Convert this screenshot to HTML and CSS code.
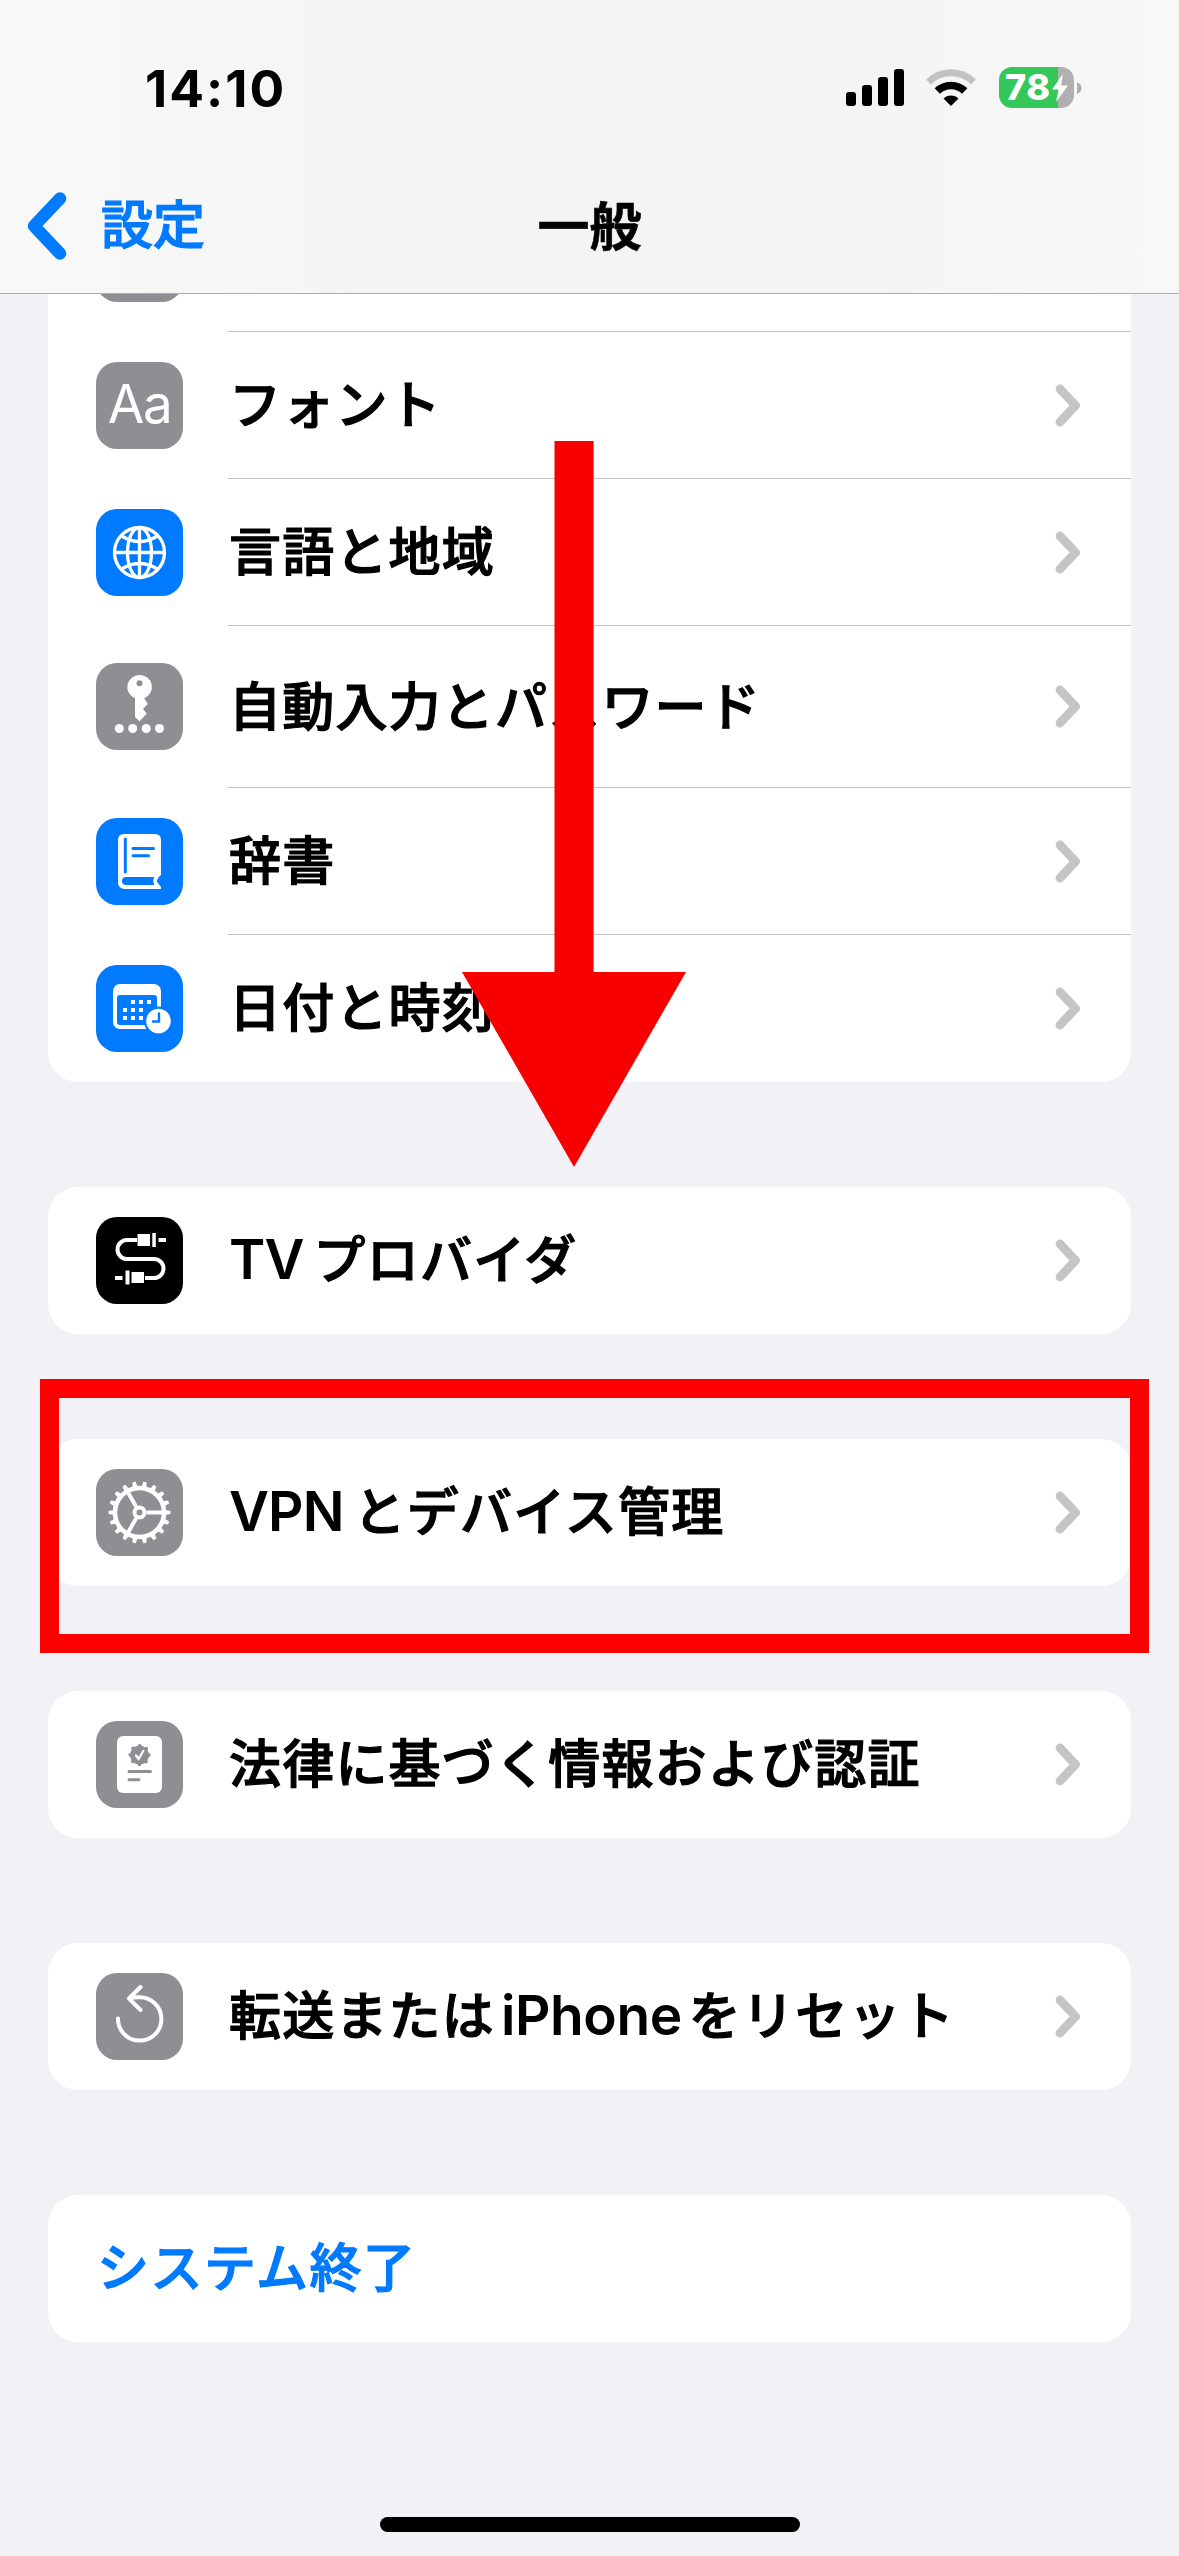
FILE: index.html
```html
<!DOCTYPE html>
<html lang="ja">
<head>
<meta charset="utf-8">
<title>一般</title>
<link rel="stylesheet" href="styles.css">
</head>
<body>
<svg class="defs" width="0" height="0">
  <defs>
    <symbol id="chev" viewBox="0 0 26 44"><path d="M5 5 L20.500 21.500 L5 38" fill="none" stroke="#c5c5c7" stroke-width="8.800" stroke-linecap="round" stroke-linejoin="round"/></symbol>
    <path id="tooth" d="M-2.600 -25.500 L-1.600 -31 H1.600 L2.600 -25.500 Z"/>
  </defs>
</svg>
<div class="screen">
  <header class="header">
    <div class="status">
      <span class="time">14:10</span>
      <div class="indicators">
        <svg width="58" height="38" viewBox="0 0 58 38"><rect x="0" y="23" width="10" height="14" rx="3"/><rect x="16" y="16" width="10" height="21" rx="3"/><rect x="32" y="8" width="10" height="29" rx="3"/><rect x="48" y="0" width="10" height="37" rx="3"/></svg>
        <svg class="wifi" width="50" height="38" viewBox="0 0 50 38"><path d="M2.500 13 A32 32 0 0 1 47.500 13" fill="none" stroke="#c2c2c2" stroke-width="7"/><path d="M11.300 22 A19.500 19.500 0 0 1 38.700 22" fill="none" stroke="#000" stroke-width="7.500"/><path d="M25 37 L17.500 29.500 A10.600 10.600 0 0 1 32.500 29.500 Z"/></svg>
        <div class="battery"><span>78</span><svg class="bolt" width="18" height="28" viewBox="0 0 18 28"><path d="M12 0 L1 15.500 H7.500 L5 28 L17 11.500 H10 Z" fill="#fff"/></svg></div>
        <svg width="5" height="12" viewBox="0 0 5 12"><path d="M0 0 Q4.500 2 4.500 6 T0 12 Z" fill="#b0b0b0"/></svg>
      </div>
    </div>
    <nav class="nav">
      <a class="back"><svg width="42" height="68" viewBox="0 0 42 68"><path d="M34 6.500 L8 34 L34 61.500" fill="none" stroke="#007aff" stroke-width="12.500" stroke-linecap="round" stroke-linejoin="round"/></svg><span>設定</span></a>
      <h1 class="title">一般</h1>
    </nav>
  </header>
  <main class="list">
    <section class="card first">
      <div class="row partial"><span class="icon gray cut"></span></div>
      <div class="row"><span class="icon gray aa">Aa</span><span class="label">フォント</span><svg class="chev"><use href="#chev"/></svg></div>
      <div class="row"><span class="icon blue"><svg viewBox="0 0 87 87" fill="none" stroke="#fff" stroke-width="3.300"><circle cx="43.500" cy="43.500" r="25"/><ellipse cx="43.500" cy="43.500" rx="12" ry="25"/><path d="M43.500 18.500 V68.500 M18.500 43.500 H68.500 M25.500 27 Q43.500 38 61.500 27 M25.500 60 Q43.500 49 61.500 60"/></svg></span><span class="label">言語と地域</span><svg class="chev"><use href="#chev"/></svg></div>
      <div class="row tall"><span class="icon gray"><svg viewBox="0 0 87 87" fill="#fff"><path fill-rule="evenodd" d="M43.500 12 A12 12 0 0 1 48.200 35.200 L51.800 41 L47 46 L50.800 50.500 L43.500 58.200 L39 54 V35.200 A12 12 0 0 1 43.500 12 Z M43.500 17.300 A3 3 0 1 0 43.500 23.300 A3 3 0 1 0 43.500 17.300 Z"/><circle cx="23.300" cy="65.500" r="4.500"/><circle cx="36.700" cy="65.500" r="4.500"/><circle cx="50.200" cy="65.500" r="4.500"/><circle cx="63.500" cy="65.500" r="4.500"/></svg></span><span class="label">自動入力とパスワード</span><svg class="chev"><use href="#chev"/></svg></div>
      <div class="row"><span class="icon blue"><svg viewBox="0 0 87 87"><path d="M28 16 H59 Q65 16 65 22 V57 Q61 60 61 64 L65 69 V71 H29 Q22 71 22 64 V22 Q22 16 28 16 Z" fill="#fff"/><path d="M29.300 21 V54 M37 30.500 H57.500 M37 37.700 H52.500" stroke="#007aff" stroke-width="3" stroke-linecap="round" fill="none"/><path d="M30 59 H58.500 Q56 63 58.500 67 H30 Q26 67 26 63 Q26 59 30 59 Z" fill="#007aff"/></svg></span><span class="label">辞書</span><svg class="chev"><use href="#chev"/></svg></div>
      <div class="row"><span class="icon blue"><svg viewBox="0 0 87 87"><rect x="17" y="19" width="48" height="45" rx="7" fill="#fff"/><path d="M21 33 Q21 30 24 30 H58 Q61 30 61 33 V60 H24 Q21 60 21 57 Z" fill="#007aff"/><path d="M35 35h4v4h-4zM43 35h4v4h-4zM51 35h4v4h-4zM27 43h4v4h-4zM35 43h4v4h-4zM43 43h4v4h-4zM27 51h4v4h-4zM35 51h4v4h-4zM43 51h4v4h-4z" fill="#fff"/><circle cx="62.500" cy="56" r="14.500" fill="#007aff"/><circle cx="62.500" cy="56" r="12.300" fill="#fff"/><path d="M63 48.500 V56.500 H57" stroke="#007aff" stroke-width="2.400" stroke-linecap="round" fill="none"/></svg></span><span class="label">日付と時刻</span><svg class="chev"><use href="#chev"/></svg></div>
    </section>
    <section class="card"><div class="row"><span class="icon black"><svg viewBox="0 0 87 87"><path d="M41 23 H31 A9.500 9.500 0 0 0 31 42 H58 A9.500 9.500 0 0 1 58 61 H49" fill="none" stroke="#fff" stroke-width="4"/><path d="M41.500 17h12.500v12H41.500zM56.300 16h3.500v14h-3.500zM62.500 21H70v4H62.500zM35.500 55h12.500v11H35.500zM29.500 53.500h4v14h-4zM19 59h7.500v4H19z" fill="#fff"/></svg></span><span class="label"><span class="latin first-word">TV</span>プロバイダ</span><svg class="chev"><use href="#chev"/></svg></div></section>
    <section class="card"><div class="row"><span class="icon gray"><svg viewBox="0 0 87 87"><g transform="translate(43.500 43.500)"><circle r="24.500" fill="none" stroke="#fff" stroke-width="4.500"/><circle r="5" fill="none" stroke="#fff" stroke-width="4"/><path d="M7 0 H23 M-3.500 -6 L-12 -21 M-3.500 6 L-12 21" stroke="#fff" stroke-width="4"/><g fill="#fff"><use href="#tooth" transform="rotate(10)"/><use href="#tooth" transform="rotate(30)"/><use href="#tooth" transform="rotate(50)"/><use href="#tooth" transform="rotate(70)"/><use href="#tooth" transform="rotate(90)"/><use href="#tooth" transform="rotate(110)"/><use href="#tooth" transform="rotate(130)"/><use href="#tooth" transform="rotate(150)"/><use href="#tooth" transform="rotate(170)"/><use href="#tooth" transform="rotate(190)"/><use href="#tooth" transform="rotate(210)"/><use href="#tooth" transform="rotate(230)"/><use href="#tooth" transform="rotate(250)"/><use href="#tooth" transform="rotate(270)"/><use href="#tooth" transform="rotate(290)"/><use href="#tooth" transform="rotate(310)"/><use href="#tooth" transform="rotate(330)"/><use href="#tooth" transform="rotate(350)"/></g></g></svg></span><span class="label"><span class="latin first-word">VPN</span>とデバイス管理</span><svg class="chev"><use href="#chev"/></svg></div></section>
    <section class="card"><div class="row"><span class="icon gray"><svg viewBox="0 0 87 87"><rect x="21" y="15" width="45" height="57" rx="6" fill="#fff"/><circle cx="43.500" cy="34" r="9.500" fill="#8e8e93"/><circle cx="43.500" cy="34" r="9.200" fill="none" stroke="#8e8e93" stroke-width="3.800" stroke-dasharray="0 7.226" stroke-linecap="round"/><path d="M40 34.500 L42.500 38 L47.300 30" fill="none" stroke="#fff" stroke-width="2.200" stroke-linecap="round"/><path d="M33 50.500 H54.500 M33 58.700 H43" stroke="#8e8e93" stroke-width="3" stroke-linecap="round"/></svg></span><span class="label">法律に基づく情報および認証</span><svg class="chev"><use href="#chev"/></svg></div></section>
    <section class="card"><div class="row"><span class="icon gray"><svg viewBox="0 0 87 87" fill="none" stroke="#fff" stroke-width="4" stroke-linecap="round" stroke-linejoin="round"><path d="M22 45.500 A21.700 21.700 0 1 0 43.500 24.200 Q38 24 33.500 25.500 M44.500 14 L33 25.500 L44.500 37"/></svg></span><span class="label">転送または<span class="latin word">iPhone</span>をリセット</span><svg class="chev"><use href="#chev"/></svg></div></section>
    <section class="card"><div class="row"><span class="label link">システム終了</span></div></section>
  </main>
  <div class="home"></div>
  <svg class="arrow" width="224" height="726" viewBox="0 0 224 726"><path d="M92.500 0 H131.600 V531 H224 L112 726 L0 531 H92.500 Z" fill="#f90000"/></svg>
  <div class="mark"></div>
</div>
</body>
</html>
```
FILE: styles.css
```css
* { box-sizing: border-box; }
body { margin: 0; background: #f2f1f6; font-family: Inter, "Noto Sans CJK JP", sans-serif; color: #000; }
.defs { position: absolute; }
svg { display: block; flex: none; }
.screen { position: relative; width: 1179px; height: 2556px; overflow: hidden; display: flex; flex-direction: column; background: #f2f1f6; }
.header { flex: none; height: 294px; border-bottom: 1px solid #adadaf; background: linear-gradient(90deg, #f9f9f9, #f4f4f4 35%, #f4f4f4 70%, #f8f8f9); }
.status { height: 176px; display: flex; justify-content: space-between; align-items: flex-start; padding: 67px 97px 0 145px; }
.time { font-size: 51.5px; font-weight: 700; line-height: 43px; letter-spacing: 2px; }
.indicators { display: flex; align-items: center; height: 41px; }
.wifi { margin: 0 23px 0 22px; }
.battery { width: 75px; height: 41px; margin-right: 3px; border-radius: 13px; background: linear-gradient(90deg, #34c759 59px, #b0b0b0 59px); display: flex; align-items: center; padding-left: 6px; color: #fff; font-size: 36px; font-weight: 800; line-height: 41px; letter-spacing: 0.5px; }
.nav { height: 100px; display: grid; grid-template-columns: 1fr auto 1fr; align-items: center; }
.back { display: flex; align-items: center; gap: 33px; padding-left: 26px; color: #007aff; font-size: 52px; font-weight: 500; line-height: 60px; -webkit-text-stroke: 1.2px #007aff; }
.title { margin: 3px 0 0; font-size: 52px; font-weight: 700; line-height: 60px; -webkit-text-stroke: 0.6px #000; }
.list { flex: 1; display: flex; flex-direction: column; gap: 105px; padding: 0 48px; }
.card { background: #fff; border-radius: 30px; }
.first { border-radius: 0 0 30px 30px; }
.row { position: relative; height: 147px; display: flex; align-items: center; padding: 0 50px 0 48px; }
.row + .row::before { content: ""; position: absolute; left: 180px; right: 0; top: -1px; height: 1px; background: #c4c4c6; }
.tall { height: 162px; }
.tall .icon { margin-bottom: 2px; }
.tall .label { margin-top: 2px; }
.partial { height: 38px; align-items: flex-start; overflow: hidden; }
.icon { flex: none; width: 87px; height: 87px; border-radius: 21px; margin-right: 46px; overflow: hidden; }
.icon svg { width: 87px; height: 87px; }
.gray { background: #8e8e93; }
.blue { background: #007aff; }
.black { background: #000; }
.cut { margin-top: -79px; }
.aa { color: #fff; font-size: 53px; font-weight: 400; line-height: 85px; text-align: center; letter-spacing: -1.5px; }
.label { flex: 1; font-size: 52px; font-weight: 500; line-height: 60px; letter-spacing: 1.2px; white-space: nowrap; -webkit-text-stroke: 1.2px currentColor; }
.latin { font-size: 55px; font-weight: 600; line-height: 1; -webkit-text-stroke: 0; }
.first-word { margin-right: 10px; letter-spacing: -0.9px; }
.word { margin: 0 7px 0 6px; letter-spacing: -0.4px; }
.link { padding-left: 1px; letter-spacing: 1.5px; color: #007aff; }
.chev { width: 26px; height: 44px; }
.home { flex: none; align-self: center; width: 420px; height: 15px; margin-bottom: 24px; border-radius: 8px; background: #000; }
.arrow { position: absolute; left: 462px; top: 441px; }
.mark { position: absolute; left: 40px; top: 1379px; width: 1109px; height: 274px; border: 19px solid #f00; }
```
